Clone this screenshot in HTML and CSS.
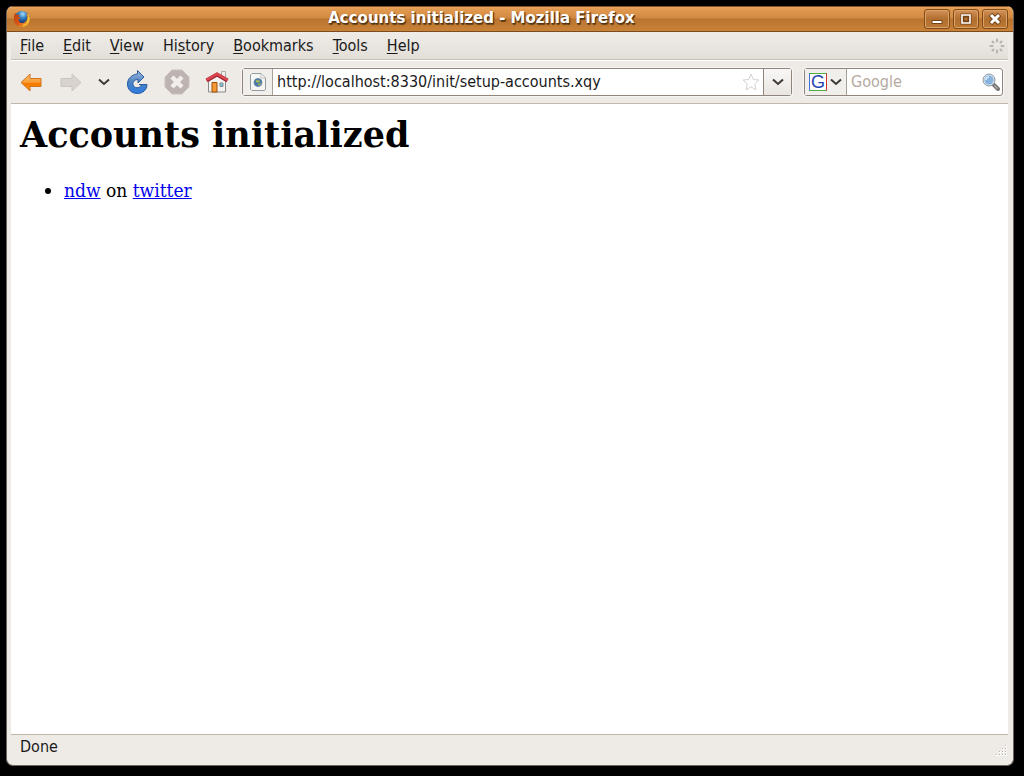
FILE: index.html
```html
<!DOCTYPE html>
<html lang="en">
<head>
<meta charset="utf-8">
<title>Accounts initialized - Mozilla Firefox</title>
<link rel="stylesheet" href="styles.css">
</head>
<body>
<div class="window">
  <header class="titlebar">
    <svg class="app-icon" viewBox="0 0 18 18" width="18" height="18" aria-hidden="true">
      <defs>
        <radialGradient id="globe" cx=".55" cy=".2" r=".7"><stop offset="0" stop-color="#a6dcf5"/><stop offset=".4" stop-color="#347fc0"/><stop offset="1" stop-color="#0b1c57"/></radialGradient>
        <linearGradient id="fox" x1="0" y1="0" x2="1" y2="1"><stop offset="0" stop-color="#b9400d"/><stop offset=".5" stop-color="#d95316"/><stop offset="1" stop-color="#fbc53a"/></linearGradient>
      </defs>
      <circle cx="9" cy="8.500" r="7.500" fill="url(#globe)"/>
      <path d="M2 3l2 2 3-.5-1.500 2 2 2-2 1 1 2.500c2 2 5.500 1 7-1.500 1.200-2.500 1-5-.5-7.500 3 2 4 5 3.500 8C15.800 14.500 13 17 9 17 4 17 .7 13 1 8.500 1 6 1.500 4 2 3z" fill="url(#fox)"/>
      <path d="M14.500 4c1.500 3 1 6-.5 8M16.300 7c.3 4-2.300 7.800-6.300 8.500" fill="none" stroke="#f5c433" stroke-width="1.200"/>
    </svg>
    <div class="window-title">Accounts initialized - Mozilla Firefox</div>
    <div class="window-controls">
      <button class="window-button" type="button" aria-label="Minimize"><svg viewBox="0 0 12 12" width="12" height="12"><path d="M1 7.500h10v3H1z" fill="#fff" stroke="#754315"/></svg></button>
      <button class="window-button" type="button" aria-label="Maximize"><svg viewBox="0 0 12 12" width="12" height="12"><path d="M2.500 2.500h7v7h-7z" fill="none" stroke="#754315" stroke-width="4"/><path d="M2 2h8v8H2z" fill="none" stroke="#fff" stroke-width="1.600"/></svg></button>
      <button class="window-button" type="button" aria-label="Close"><svg viewBox="0 0 12 12" width="12" height="12"><path d="M1.500 1.500l9 9M10.500 1.500l-9 9" stroke="#754315" stroke-width="5"/><path d="M2 2l8 8M10 2l-8 8" stroke="#fff" stroke-width="3"/></svg></button>
    </div>
  </header>
  <div class="client">
    <nav class="menubar" aria-label="Main menu">
      <button class="menu" type="button"><u>F</u>ile</button>
      <button class="menu" type="button"><u>E</u>dit</button>
      <button class="menu" type="button"><u>V</u>iew</button>
      <button class="menu" type="button">Hi<u>s</u>tory</button>
      <button class="menu" type="button"><u>B</u>ookmarks</button>
      <button class="menu" type="button"><u>T</u>ools</button>
      <button class="menu" type="button"><u>H</u>elp</button>
      <svg class="throbber" viewBox="0 0 16 16" width="16" height="16" aria-hidden="true"><path d="M8 1.500v2M8 12.500v2M1.500 8h2M12.500 8h2M3.500 3.500l1 1M11.500 11.500l1 1M12.500 3.500l-1 1M4.500 11.500l-1 1" stroke="#b7b2ac" stroke-width="2" stroke-linecap="round"/></svg>
    </nav>
    <div class="toolbar">
      <button class="tool back" type="button" aria-label="Back"><svg viewBox="0 0 24 24" width="24" height="24">
        <defs><linearGradient id="orange" x2="0" y2="1"><stop offset="0" stop-color="#fcc27c"/><stop offset=".5" stop-color="#f99a30"/><stop offset=".55" stop-color="#f57900"/><stop offset="1" stop-color="#f88f14"/></linearGradient></defs>
        <path d="M2 12.500L11 4v4.500h11v8H11V21z" fill="url(#orange)" stroke="#cf7421"/></svg></button>
      <button class="tool forward" type="button" aria-label="Forward" disabled><svg viewBox="0 0 24 24" width="24" height="24"><path d="M22 12.500L13 4v4.500H2v8h11V21z" fill="#d8d3ce" stroke="#cac5bf"/></svg></button>
      <button class="tool recent" type="button" aria-label="Recent pages"><svg viewBox="0 0 12 8" width="12" height="8"><path d="M1 1.500l5 4.500 5-4.500" fill="none" stroke="#3c3935" stroke-width="2"/></svg></button>
      <button class="tool reload" type="button" aria-label="Reload"><svg viewBox="0 0 24 26" width="24" height="26">
        <defs><linearGradient id="blue" x2="0" y2="1"><stop offset="0" stop-color="#a2bddb"/><stop offset=".5" stop-color="#4c83c4"/><stop offset="1" stop-color="#2b7ce0"/></linearGradient></defs>
        <path d="M12.500 1.500l6.500 6.500-6 6V10.500C9.500 10.500 7.500 13 8 15.500c1 4 6.500 4.500 8.500.5l-2.500-.5h8C22 21 17.500 24.500 12.500 24.500 6.500 24.500 2.500 20.500 2.500 15 2.500 9.500 7 5.500 12.500 5z" fill="url(#blue)" stroke="#2b5a9e"/></svg></button>
      <button class="tool stop" type="button" aria-label="Stop" disabled><svg viewBox="0 0 26 26" width="26" height="26"><path d="M8 1h10l7 7v10l-7 7H8l-7-7V8z" fill="#bdb4b2" stroke="#c8c1be"/><path d="M8 8l10 10M18 8L8 18" stroke="#f2eeec" stroke-width="4.500"/></svg></button>
      <button class="tool home" type="button" aria-label="Home"><svg viewBox="0 0 24 24" width="24" height="24">
        <path d="M16.500 1.500h4v8h-4z" fill="#eee" stroke="#aaa"/>
        <path d="M3.500 11L12 5l8.500 6v11h-17z" fill="#f3f3f1" stroke="#888"/>
        <path d="M7 12.500h5V22H7z" fill="#f59a35" stroke="#9c5009"/>
        <path d="M15 13h3v3.500h-3z" fill="#70c8ec" stroke="#888"/>
        <path d="M1.500 10.500L12 4.500l10.500 6" fill="none" stroke="#a42631" stroke-width="4"/><path d="M1.500 10L12 4l10.500 6" fill="none" stroke="#dc4650" stroke-width="2.500"/></svg></button>
      <form class="location">
        <button class="site" type="button" aria-label="Site information"><svg viewBox="0 0 16 18" width="16" height="18"><path d="M2 .5h9L15.500 5v11l-1 1.500H2L.5 16V2z" fill="#f6f6f5" stroke="#949b9e"/><path d="M11 1v4h4" fill="#fff" stroke="#bbb"/><circle cx="8" cy="9.500" r="4" fill="#4a78ab" stroke="#6e8ba7"/><path d="M6 7l4 .5-1 2.500-3-1zM8 11l3-1-1 2.500-2-.5z" fill="#a7b957"/></svg></button>
        <input class="address" type="text" aria-label="Address" value="http://localhost:8330/init/setup-accounts.xqy">
        <button class="bookmark" type="button" aria-label="Bookmark this page"><svg viewBox="0 0 18 18" width="18" height="18"><path d="M9 1l2.300 5.500 5.700.5-4.300 4 1.300 6-5-3.200L4 17l1.300-6L1 7l5.700-.5z" fill="#fff" stroke="#d5d2ce"/></svg></button>
        <button class="history" type="button" aria-label="Show history"><svg viewBox="0 0 12 8" width="12" height="8"><path d="M1 1.500l5 4.500 5-4.500" fill="none" stroke="#3c3935" stroke-width="2"/></svg></button>
      </form>
      <form class="search">
        <button class="engine" type="button" aria-label="Choose search engine"><span class="engine-logo">G</span><svg viewBox="0 0 12 8" width="12" height="8"><path d="M1 1.500l5 4.500 5-4.500" fill="none" stroke="#3c3935" stroke-width="2"/></svg></button>
        <input class="query" type="text" placeholder="Google" aria-label="Search">
        <button class="go" type="button" aria-label="Search"><svg viewBox="0 0 18 18" width="18" height="18"><path d="M12 12l4 4" stroke="#777775" stroke-width="4" stroke-linecap="round"/><path d="M12.500 12.500l3 3" stroke="#aaa" stroke-width="1.500"/><circle cx="7" cy="7" r="6" fill="#d9e6f2" stroke="#8f979e"/><circle cx="7" cy="7" r="4.500" fill="#87b3dd"/><path d="M4 7c0-2 1.500-3 3-3" fill="none" stroke="#d7eaff" stroke-width="1.500"/></svg></button>
      </form>
    </div>
    <main class="page">
      <h1>Accounts initialized</h1>
      <ul>
        <li><a href="#ndw">ndw</a> on <a href="#twitter">twitter</a></li>
      </ul>
    </main>
  </div>
  <footer class="statusbar">
    <span>Done</span>
    <svg class="grip" viewBox="0 0 14 14" width="14" height="14" aria-hidden="true"><path d="M11 1h2v2h-2zM8 4h2v2H8zM11 4h2v2h-2zM5 7h2v2H5zM8 7h2v2H8zM11 7h2v2h-2zM2 10h2v2H2zM5 10h2v2H5zM8 10h2v2H8zM11 10h2v2h-2z" fill="#fff"/><path d="M11 1h1v1h-1zM8 4h1v1H8zM11 4h1v1h-1zM5 7h1v1H5zM8 7h1v1H8zM11 7h1v1h-1zM2 10h1v1H2zM5 10h1v1H5zM8 10h1v1H8zM11 10h1v1h-1z" fill="#b5aea5"/></svg>
  </footer>
</div>
</body>
</html>
```
FILE: styles.css
```css
* {
  box-sizing: border-box;
}

body {
  margin: 0;
  height: 100vh;
  padding: 6px 10px 10px 6px;
  background: #000;
  color: #1a1a1a;
  font: 16px/20px "DejaVu Sans Condensed", "DejaVu Sans", sans-serif;
}

button,
input {
  margin: 0;
  padding: 0;
  border: 0;
  background: none;
  color: inherit;
  font: inherit;
}

svg {
  display: block;
}

.window {
  height: 100%;
  display: flex;
  flex-direction: column;
  overflow: hidden;
  border: 1px solid #6f675e;
  border-top: 0;
  border-radius: 7px;
  background: #eeebe7;
}

.titlebar {
  display: flex;
  align-items: center;
  flex: none;
  height: 26px;
  padding: 0 5px 0 6px;
  border-top: 1px solid #80501f;
  border-bottom: 1px solid #7b4c1e;
  background: linear-gradient(#eda968 0, #e29a50 2px, #d18840 11px, #b9742f 12px, #c98237 100%);
}

.window-title {
  flex: 1;
  padding: 0 0 2px 8px;
  color: #fff;
  font: bold 15px/18px "DejaVu Sans", sans-serif;
  text-align: center;
  text-shadow: 1px 1px 1px #4d3213, 1px 2px 1px #6b4417;
}

.window-controls {
  display: flex;
  gap: 3px;
}

.window-button {
  display: flex;
  align-items: center;
  justify-content: center;
  width: 26px;
  height: 20px;
  border: 1px solid #7d4b1b;
  border-radius: 3px;
  background: linear-gradient(#d3915a, #b06f30 50%, #bd7a35);
  box-shadow: inset 0 0 0 1px #dfa263;
}

.client {
  flex: 1;
  display: flex;
  flex-direction: column;
  min-height: 0;
  margin: 0 5px 0 4px;
}

.menubar {
  display: flex;
  align-items: center;
  flex: none;
  height: 28px;
  padding: 0 3px 0 9px;
  gap: 19px;
  border-bottom: 1px solid #c9c1b8;
  background: linear-gradient(#efece8, #e3ded8);
}

.menu u {
  text-underline-offset: 2px;
}

.throbber {
  margin-left: auto;
}

.toolbar {
  display: flex;
  align-items: center;
  flex: none;
  height: 44px;
  padding: 0 5px 0 7px;
  border-top: 1px solid #fff;
  border-bottom: 1px solid #c1b6aa;
}

.tool {
  display: grid;
  place-items: center;
  flex: none;
  width: 40px;
  height: 40px;
}

.back,
.recent {
  width: 26px;
}

.forward {
  margin-left: 7px;
}

.location,
.search {
  display: flex;
  height: 28px;
  border: 1px solid #8f857c;
  border-radius: 3px;
  background: #fff;
  box-shadow: 0 0 0 1px #f8f6f4;
}

.location {
  flex: 1;
  min-width: 0;
  margin: 0 12px 0 5px;
}

.site,
.bookmark,
.history,
.engine,
.go {
  display: flex;
  align-items: center;
  justify-content: center;
  flex: none;
}

.site {
  width: 30px;
  border-right: 1px solid #aaa197;
  background: #f1efec;
}

.address,
.query {
  flex: 1;
  min-width: 0;
  padding-left: 4px;
}

.bookmark {
  width: 24px;
}

.history {
  width: 28px;
  border-left: 1px solid #8f857c;
  background: linear-gradient(#f9f8f7, #e9e5e0);
}

.search {
  flex: none;
  width: 199px;
}

.engine {
  width: 42px;
  gap: 3px;
  border-right: 1px solid #aaa197;
  background: #f1efec;
}

.engine-logo {
  width: 18px;
  height: 18px;
  border: 1px solid;
  border-color: #4cae3c #cf3030 #4cae3c #3f6fd8;
  background: #fff;
  color: #2445b0;
  font: 18px/16px "Liberation Sans", sans-serif;
  text-align: center;
}

.query::placeholder {
  color: #b5aaa0;
  opacity: 1;
}

.go {
  width: 22px;
}

.page {
  flex: 1;
  min-height: 0;
  overflow: auto;
  padding: 9px;
  background: #fff;
  color: #000;
  font: 19px/22px "DejaVu Serif Condensed", "DejaVu Serif", serif;
}

.page h1 {
  margin: 0 0 22px;
  font: bold 35px/44px "DejaVu Serif", serif;
}

.page ul {
  margin: 0;
  padding-left: 44px;
}

.page a {
  color: #00e;
}

.statusbar {
  display: flex;
  align-items: center;
  justify-content: space-between;
  flex: none;
  height: 31px;
  margin: 0 5px 0 4px;
  padding: 0 0 7px 9px;
  border-top: 1px solid #c1b6aa;
}

.grip {
  align-self: flex-end;
}
```
